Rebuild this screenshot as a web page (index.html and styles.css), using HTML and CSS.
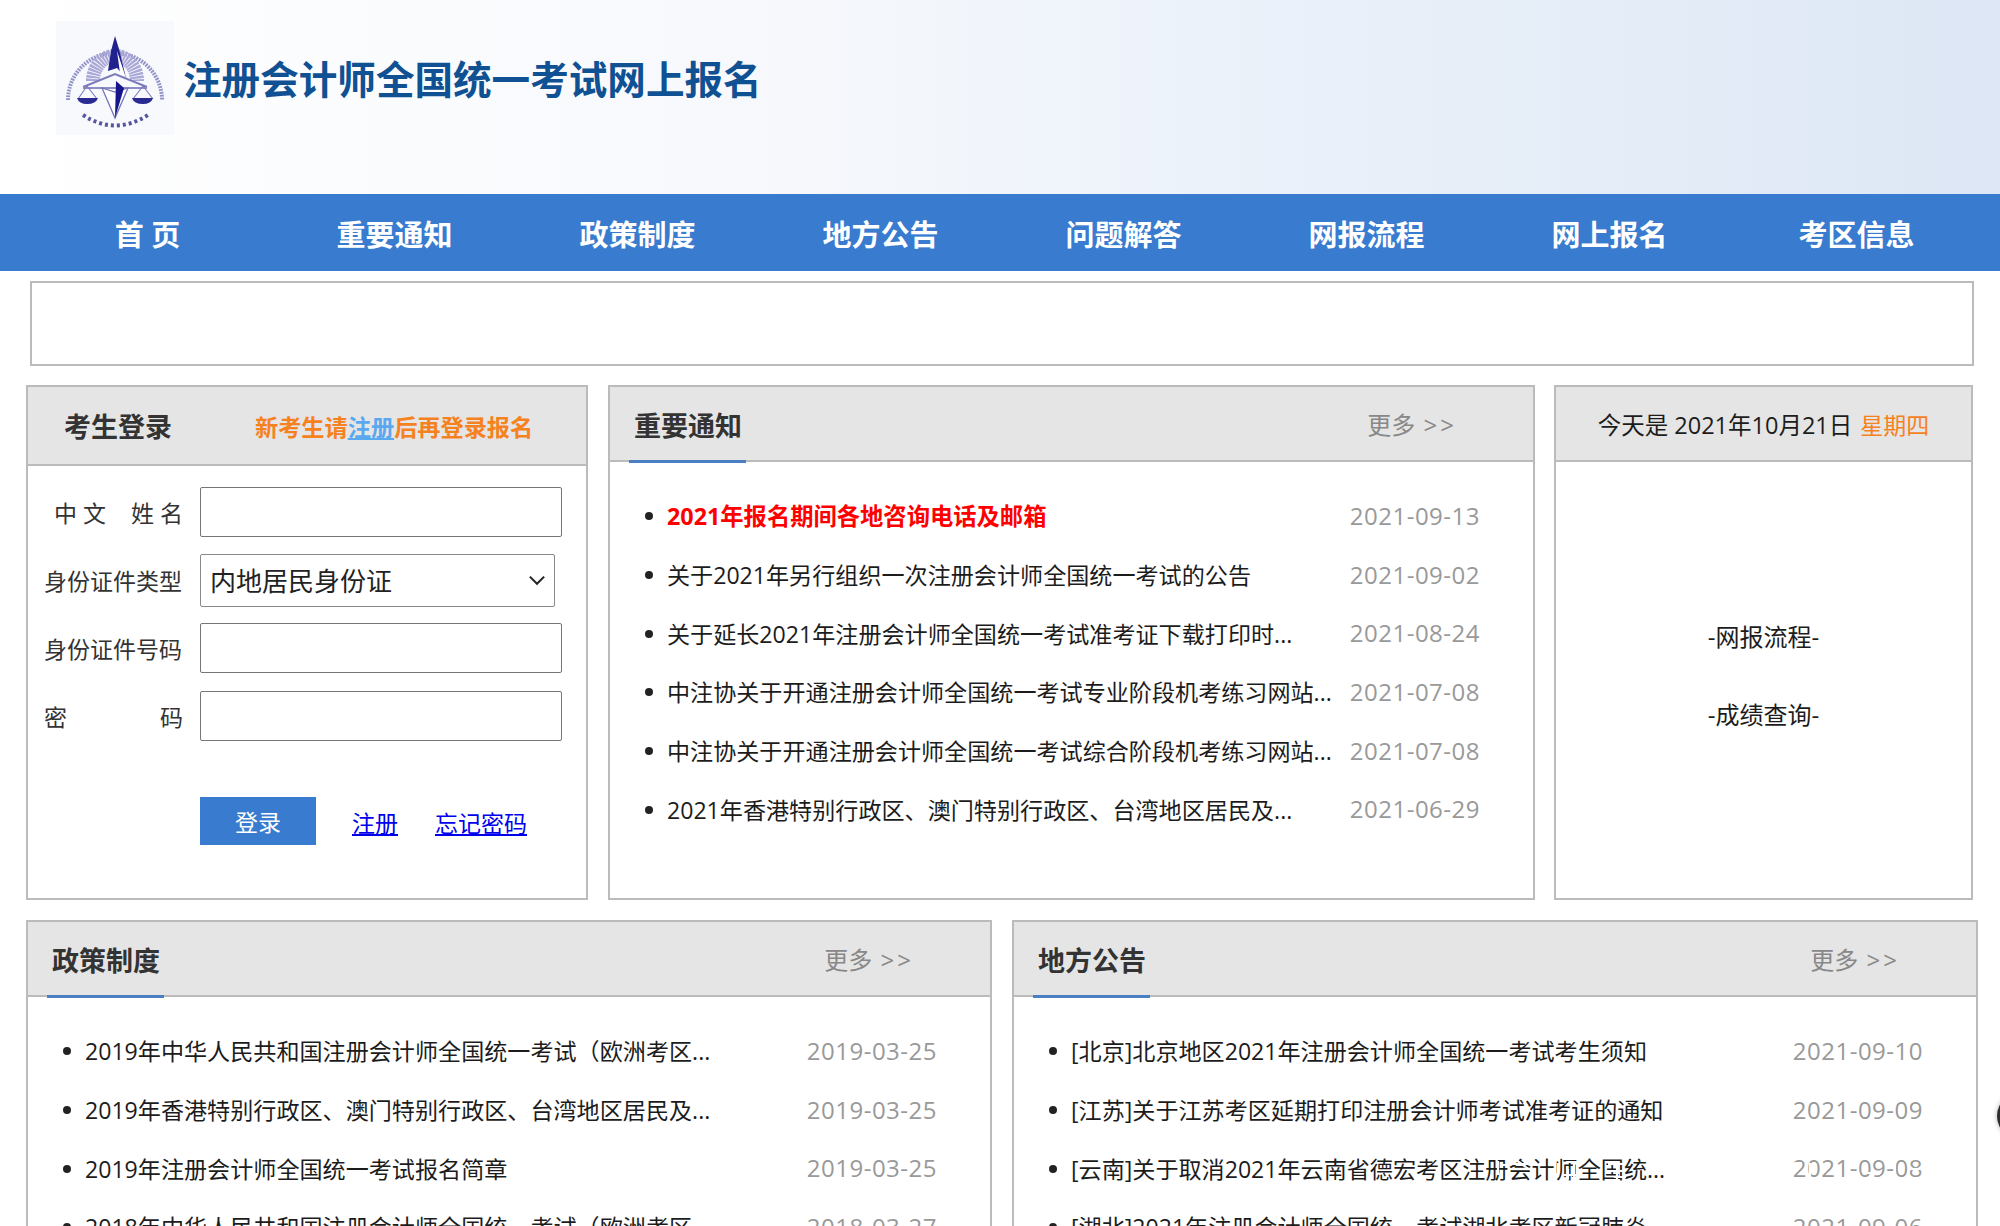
FILE: index.html
```html
<!DOCTYPE html>
<html lang="zh-CN">
<head>
<meta charset="utf-8">
<title>注册会计师全国统一考试网上报名</title>
<link rel="stylesheet" href="styles.css">
</head>
<body>
<header class="masthead">
  <svg class="logo" viewBox="0 0 118 114" aria-hidden="true">
    <defs><filter id="soft"><feGaussianBlur stdDeviation="0.5"/></filter></defs>
    <rect width="118" height="114" fill="#f8f9fd"/>
    <g filter="url(#soft)">
      <path d="M12 79A47 47 0 1 1 106 79" fill="none" stroke="#8f92c6" stroke-width="4" stroke-dasharray="1.800 1.100"/>
      <path d="M37 60A21 24 0 0 1 81 60" fill="none" stroke="#a9a8d6" stroke-width="14" stroke-dasharray="2.200 .8"/>
      <path d="M59 15L63 28 70 57 61 47 52 50 55 30Z" fill="#20218e"/>
      <path d="M61 30L70 57 64 52Z" fill="#fff"/>
      <path d="M27 66L59 53 91 66" fill="none" stroke="#7b7cbb" stroke-width="2"/>
      <path d="M27 67H91" fill="none" stroke="#8d8ec8" stroke-width="1.800"/>
      <path d="M46 67L59 97 72 67 59 71Z" fill="#fff" stroke="#7576b8" stroke-width="1.300"/>
      <path d="M60 60L68 67 59 97Z" fill="#14158a"/>
      <path d="M31 65L22 78M31 65L41 78M87 65L77 78M87 65L97 78" stroke="#7b7cbb" stroke-width="1.100"/>
      <path d="M21 77H42Q40 83 31 83 23 83 21 77ZM76 77H97Q95 83 87 83 78 83 76 77Z" fill="#2b2c93"/>
      <path d="M27 94Q59 115 92 94" fill="none" stroke="#54569f" stroke-width="4" stroke-dasharray="3 3"/>
    </g>
  </svg>
  <h1 class="site-title">注册会计师全国统一考试网上报名</h1>
</header>
<nav class="mainnav">
  <a class="nav-home">首 页</a>
  <a>重要通知</a>
  <a>政策制度</a>
  <a>地方公告</a>
  <a>问题解答</a>
  <a>网报流程</a>
  <a>网上报名</a>
  <a class="nav-last">考区信息</a>
</nav>
<div class="banner"></div>
<main>
  <div class="row-top">
    <section class="panel login">
      <div class="login-head"><h2>考生登录</h2><p>新考生请<a>注册</a>后再登录报名</p></div>
      <form class="login-form">
        <div class="field"><label class="lbl-name"><span>中 文</span><span>姓 名</span></label><input type="text"></div>
        <div class="field"><label>身份证件类型</label>
          <div class="select"><span>内地居民身份证</span>
            <svg viewBox="0 0 16 10" aria-hidden="true"><path d="M1.500 1.500L8 8l6.500-6.500" fill="none" stroke="#222" stroke-width="1.800"/></svg>
          </div>
        </div>
        <div class="field"><label>身份证件号码</label><input type="text"></div>
        <div class="field"><label class="lbl-pass"><span>密</span><span>码</span></label><input type="password"></div>
        <div class="actions"><button type="button">登录</button><a>注册</a><a>忘记密码</a></div>
      </form>
    </section>
    <section class="panel notices">
      <div class="panel-head"><h2>重要通知</h2><a class="more">更多 <span>&gt;&gt;</span></a></div>
      <ul class="news">
        <li class="hot"><a>2021年报名期间各地咨询电话及邮箱</a><time>2021-09-13</time></li>
        <li><a>关于2021年另行组织一次注册会计师全国统一考试的公告</a><time>2021-09-02</time></li>
        <li><a>关于延长2021年注册会计师全国统一考试准考证下载打印时...</a><time>2021-08-24</time></li>
        <li><a>中注协关于开通注册会计师全国统一考试专业阶段机考练习网站...</a><time>2021-07-08</time></li>
        <li><a>中注协关于开通注册会计师全国统一考试综合阶段机考练习网站...</a><time>2021-07-08</time></li>
        <li><a>2021年香港特别行政区、澳门特别行政区、台湾地区居民及...</a><time>2021-06-29</time></li>
      </ul>
    </section>
    <section class="panel side">
      <div class="side-head"><span>今天是 2021年10月21日</span><em>星期四</em></div>
      <div class="side-links"><a>-网报流程-</a><a>-成绩查询-</a></div>
    </section>
  </div>
  <div class="row-bottom">
    <section class="panel">
      <div class="panel-head"><h2>政策制度</h2><a class="more">更多 <span>&gt;&gt;</span></a></div>
      <ul class="news">
        <li><a>2019年中华人民共和国注册会计师全国统一考试（欧洲考区...</a><time>2019-03-25</time></li>
        <li><a>2019年香港特别行政区、澳门特别行政区、台湾地区居民及...</a><time>2019-03-25</time></li>
        <li><a>2019年注册会计师全国统一考试报名简章</a><time>2019-03-25</time></li>
        <li><a>2018年中华人民共和国注册会计师全国统一考试（欧洲考区...</a><time>2018-03-27</time></li>
      </ul>
    </section>
    <section class="panel">
      <div class="panel-head"><h2>地方公告</h2><a class="more">更多 <span>&gt;&gt;</span></a></div>
      <ul class="news">
        <li><a>[北京]北京地区2021年注册会计师全国统一考试考生须知</a><time>2021-09-10</time></li>
        <li><a>[江苏]关于江苏考区延期打印注册会计师考试准考证的通知</a><time>2021-09-09</time></li>
        <li><a>[云南]关于取消2021年云南省德宏考区注册会计师全国统...</a><time>2021-09-08</time></li>
        <li><a>[湖北]2021年注册会计师全国统一考试湖北考区新冠肺炎</a><time>2021-09-06</time></li>
      </ul>
    </section>
  </div>
</main>
<svg class="scuff" viewBox="0 0 440 30" aria-hidden="true">
  <g fill="none" stroke="#fff" stroke-width="2.200">
    <path d="M8 6V20M12 10H16"/>
    <path d="M22 9H42M26 5L36 12"/>
    <path d="M68 8V22M76 7H92M78 14V24M84 6V26M72 20H92"/>
    <path d="M118 9H136M120 16H134M124 22H136M127 6V24"/>
    <path d="M305 8H312M320 8V22M346 12V24M377 18H387M405 8V22M420 14H430"/>
  </g>
</svg>
<div class="float-ball"></div>
</body>
</html>
```
FILE: styles.css
```css
* { box-sizing: border-box; }
html, body { margin: 0; height: 1226px; overflow: hidden; background: #fff; }
body { font-family: "Open Sans", "Noto Sans CJK SC", sans-serif; color: #1c1c1c; font-size: 23px; position: relative; }
h1, h2, p, ul { margin: 0; padding: 0; }
.masthead { height: 194px; display: flex; align-items: flex-start; padding: 21px 0 0 56px;
  background: linear-gradient(90deg, #fff 0%, #f6f8fc 40%, #ecf2fa 60%, #dde7f5 100%); }
.logo { width: 118px; height: 114px; flex: none; }
.site-title { margin: 33px 0 0 9px; font-size: 38.600px; line-height: 50px; font-weight: 700; color: #0f5192; white-space: nowrap; }
.mainnav { height: 77px; background: #387bcf; display: grid; grid-template-columns: repeat(8, 243px); padding-left: 30px; align-items: center; justify-items: center; }
.mainnav a { color: #fff; font-weight: 700; font-size: 29px; }
.mainnav .nav-home { margin-right: 8px; }
.mainnav .nav-last { margin-left: 8px; }
.banner { height: 85px; margin: 10px 26px 0 30px; border: 2px solid #bbb; }
main { padding: 0 23px 0 26px; }
.row-top { display: flex; gap: 19px; margin-top: 19px; height: 515px; padding-right: 4px; }
.row-bottom { display: flex; gap: 20px; margin-top: 20px; }
.panel { border: 2px solid #bbb; }
.login { width: 562px; flex: none; }
.notices { width: 927px; flex: none; margin-left: 1px; }
.side { flex: 1; }
.row-bottom .panel { width: 966px; height: 400px; flex: none; }
.login-head { height: 79px; background: #e5e5e5; border-bottom: 2px solid #bbb; display: flex; align-items: center; padding-left: 36px; }
.login-head h2 { font-size: 27px; color: #333; width: 191px; }
.login-head p { font-size: 23.200px; font-weight: 700; color: #f5821f; }
.login-head p a { color: #5aa9f0; text-decoration: underline; }
.login-form { padding: 21px 24px 0 16px; }
.field { display: flex; align-items: center; margin-bottom: 18px; height: 50px; }
.field label { width: 139px; flex: none; margin-right: 17px; color: #333; }
.lbl-name, .lbl-pass { display: flex; justify-content: space-between; }
.lbl-name { padding-left: 10px; }
.field input { flex: 1; min-width: 0; height: 50px; border: 1px solid #767676; border-radius: 2px; background: #fff; }
.select { width: 355px; height: 53px; border: 1px solid #8a8a8a; border-radius: 2px; display: flex; align-items: center; justify-content: space-between; padding: 0 8px 0 9px; font-size: 26px; color: #222; }
.select svg { width: 18px; height: 11px; }
.actions { display: flex; align-items: center; margin: 56px 0 0 156px; color: #00e; font-size: 23px; white-space: nowrap; }
.actions button { width: 116px; height: 48px; border: 0; background: #387bcf; color: #fff; font: inherit; font-size: 23px; margin-right: 36px; flex: none; }
.actions a { text-decoration: underline; margin-right: 37px; position: relative; top: 1px; }
.panel-head { height: 75px; background: #e5e5e5; border-bottom: 2px solid #bbb; display: flex; align-items: center; justify-content: space-between; padding: 0 79px 0 24px; position: relative; }
.panel-head h2 { font-size: 27px; color: #333; position: relative; top: 1px; }
.panel-head h2::after { content: ""; position: absolute; left: -5px; bottom: -19px; width: 117px; height: 3px; background: #4a7fc4; }
.more { color: #888; font-size: 24px; word-spacing: 2px; white-space: nowrap; flex: none; }
.more span { letter-spacing: 3px; margin-right: -3px; }
.news { list-style: none; padding: 24px 53px 0 35px; }
.news li { height: 58.700px; display: flex; align-items: center; justify-content: space-between; position: relative; padding-left: 22px; white-space: nowrap; font-size: 23.100px; }
.news li::before { content: ""; position: absolute; left: 0; top: 50%; width: 8px; height: 8px; margin-top: -3px; border-radius: 50%; background: #222; }
.news time { color: #999; font-size: 24px; letter-spacing: 0.500px; }
.hot a { color: #f00; font-weight: 700; font-size: 23.300px; }
.side-head { height: 75px; background: #e5e5e5; border-bottom: 2px solid #bbb; display: flex; align-items: center; justify-content: center; gap: 8px; font-size: 23.500px; white-space: nowrap; }
.side-head em { font-style: normal; color: #f5821f; font-size: 23px; }
.side-links { display: flex; flex-direction: column; align-items: center; gap: 43px; padding-top: 156px; font-size: 24px; }
.scuff { position: absolute; left: 1490px; top: 1155px; width: 440px; height: 30px; }
.float-ball { position: absolute; left: 1997px; top: 1090px; width: 60px; height: 52px; border-radius: 50%; background: #2d2d2d; box-shadow: 0 0 5px rgba(0, 0, 0, 0.300); }
```
